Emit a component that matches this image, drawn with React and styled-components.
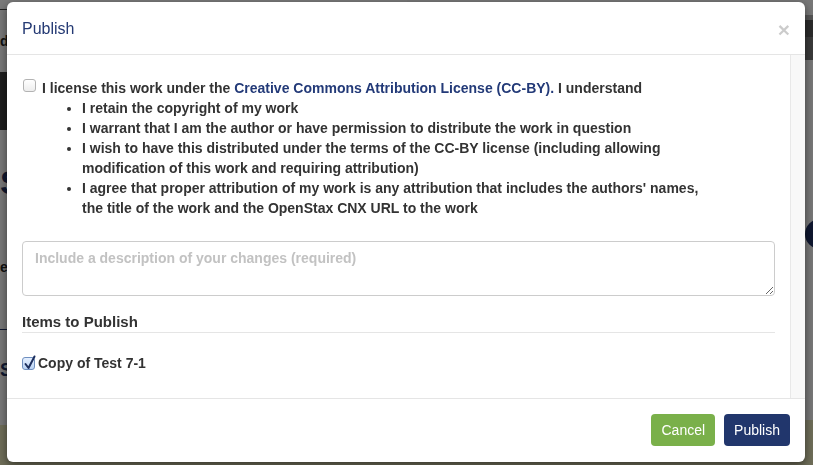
import React from "react";
import styled, { createGlobalStyle } from "styled-components";

const Global = createGlobalStyle`
  html, body { margin: 0; padding: 0; }
  body {
    width: 813px;
    height: 465px;
    overflow: hidden;
    font-family: "Liberation Sans", Arial, Helvetica, sans-serif;
    background: #fff;
  }
  * { box-sizing: border-box; }
`;

/* ---------- page behind the modal ---------- */
const Page = styled.div`
  display: grid;
  grid-template-columns: 1fr 1fr;
  height: 465px;
`;

const Column = styled.div`
  display: flex;
  flex-direction: column;
`;

const Band = styled.div`
  height: ${(p) => p.$h}px;
  background: ${(p) => p.$bg || "#eee"};
  border-bottom: ${(p) => (p.$line ? `1px solid ${p.$line}` : "none")};
  color: ${(p) => p.$color || "#222"};
  font-size: ${(p) => p.$fs || 13}px;
  font-weight: 700;
  line-height: ${(p) => p.$h}px;
  text-align: ${(p) => p.$align || "left"};
  overflow: hidden;
  white-space: nowrap;
`;

const Dot = styled.span`
  display: inline-block;
  width: 30px;
  height: 30px;
  margin-right: -22px;
  border-radius: 50%;
  background: #1d2d5e;
  vertical-align: middle;
`;

/* ---------- modal ---------- */
const Backdrop = styled.div`
  position: fixed;
  inset: 0;
  background: rgba(0, 0, 0, 0.5);
  display: flex;
  padding: 2px 8px 3px 7px;
`;

const Modal = styled.div`
  flex: 1;
  display: flex;
  flex-direction: column;
  background: #fff;
  border-radius: 6px;
  box-shadow: 0 3px 9px rgba(0, 0, 0, 0.5);
  overflow: hidden;
`;

const Header = styled.div`
  display: flex;
  align-items: center;
  justify-content: space-between;
  padding: 16px 15px 14px 15px;
  border-bottom: 1px solid #e5e5e5;
`;

const Title = styled.h4`
  margin: 0;
  font-size: 16px;
  line-height: 22px;
  font-weight: 400;
  color: #253a74;
`;

const Close = styled.button`
  border: 0;
  background: none;
  padding: 0;
  font-family: "Liberation Sans", Arial, sans-serif;
  font-size: 21px;
  line-height: 21px;
  font-weight: 700;
  color: #000;
  opacity: 0.2;
  cursor: pointer;
`;

const Body = styled.div`
  flex: 1;
  display: flex;
  min-height: 0;
`;

const Content = styled.div`
  flex: 1;
  padding: 23px 15px 15px 15px;
  color: #333;
  font-size: 14px;
  line-height: 20px;
  font-weight: 700;
`;

const ScrollTrack = styled.div`
  flex: none;
  width: 15px;
  background: #f8f8f8;
  border-left: 1px solid #e8e8e8;
`;

const CheckRow = styled.label`
  display: flex;
  align-items: flex-start;
  gap: ${(p) => p.$gap}px;
`;

const Box = styled.span`
  flex: none;
  width: 13px;
  height: 13px;
  margin-top: ${(p) => p.$mt}px;
  margin-left: ${(p) => p.$ml || 0}px;
  border-radius: 3px;
  border: 1px solid ${(p) => (p.$checked ? "#6f8fbf" : "#b3b3b3")};
  background: ${(p) =>
    p.$checked
      ? "linear-gradient(#e4efff, #b9d2f3)"
      : "linear-gradient(#ffffff, #ededed)"};
  position: relative;
`;

const CheckSvg = styled.svg`
  position: absolute;
  left: 0px;
  top: -3px;
`;

const TextCol = styled.div`
  flex: 1;
`;

const Link = styled.a`
  color: #233a78;
  text-decoration: none;
`;

const List = styled.ul`
  margin: 0;
  padding-left: 40px;
`;

const Description = styled.textarea`
  display: block;
  width: 100%;
  height: 55px;
  margin-top: 23px;
  padding: 6px 12px;
  border: 1px solid #ccc;
  border-radius: 4px;
  font-family: "Liberation Sans", Arial, sans-serif;
  font-size: 14px;
  font-weight: 700;
  line-height: 20px;
  color: #333;
  resize: vertical;
  outline: none;
  &::placeholder { color: #c2c2c2; }
`;

const SectionTitle = styled.h5`
  margin: 16px 0 0;
  padding-bottom: 0;
  border-bottom: 1px solid #e5e5e5;
  font-size: 15px;
  line-height: 20px;
  font-weight: 700;
  color: #333;
`;

const Items = styled.div`
  margin-top: 20px;
`;

const Footer = styled.div`
  display: flex;
  justify-content: flex-end;
  gap: 9px;
  padding: 15px 15px 16px;
  border-top: 1px solid #e5e5e5;
`;

const Button = styled.button`
  height: 32px;
  padding: 0 10px;
  border: 0;
  border-radius: 4px;
  font-family: "Liberation Sans", Arial, sans-serif;
  font-size: 14px;
  color: #fff;
  background: ${(p) => (p.$variant === "primary" ? "#21366c" : "#7ab04a")};
  cursor: pointer;
`;

function Checkbox({ checked, mt, ml }) {
  return (
    <Box $checked={checked} $mt={mt} $ml={ml}>
      {checked && (
        <CheckSvg width="14" height="16" viewBox="0 0 14 16">
          <path
            d="M2.5 9 L5.5 13 L11.5 1.5"
            fill="none"
            stroke="#1d2f5e"
            strokeWidth="2"
            strokeLinecap="round"
            strokeLinejoin="round"
          />
        </CheckSvg>
      )}
    </Box>
  );
}

export default function App() {
  return (
    <>
      <Global />
      <Page>
        <Column>
          <Band $h={10} $bg="#f2f2f2" $line="#444" />
          <Band $h={62} $bg="#eee" $fs={14} $color="#222">d</Band>
          <Band $h={58} $bg="#3c3c3c" />
          <Band $h={30} $bg="#eee" />
          <Band $h={45} $bg="#eee" $fs={34} $color="#20305f">S</Band>
          <Band $h={40} $bg="#eee" />
          <Band $h={45} $bg="#eee" $fs={14} $color="#222">e</Band>
          <Band $h={40} $bg="#eee" $line="#20305f" />
          <Band $h={25} $bg="#eee" />
          <Band $h={30} $bg="#eee" $fs={18} $color="#20305f">S</Band>
          <Band $h={40} $bg="#eee" />
          <Band $h={40} $bg="#dcdab0" />
        </Column>
        <Column>
          <Band $h={15} $bg="#eee" />
          <Band $h={5} $bg="#aaa" />
          <Band $h={17} $bg="#565656" />
          <Band $h={23} $bg="#747474" />
          <Band $h={150} $bg="#eee" />
          <Band $h={45} $bg="#eee" $align="right"><Dot /></Band>
          <Band $h={165} $bg="#eee" />
          <Band $h={45} $bg="#dcdab0" />
        </Column>
      </Page>

      <Backdrop>
        <Modal>
          <Header>
            <Title>Publish</Title>
            <Close aria-label="Close">×</Close>
          </Header>
          <Body>
            <Content>
              <CheckRow $gap={6}>
                <Checkbox mt={1} ml={1} />
                <TextCol>
                  I license this work under the{" "}
                  <Link>Creative Commons Attribution License (CC-BY).</Link> I
                  understand
                  <List>
                    <li>I retain the copyright of my work</li>
                    <li>
                      I warrant that I am the author or have permission to
                      distribute the work in question
                    </li>
                    <li>
                      I wish to have this distributed under the terms of the
                      CC-BY license (including allowing
                      <br />
                      modification of this work and requiring attribution)
                    </li>
                    <li>
                      I agree that proper attribution of my work is any
                      attribution that includes the authors' names,
                      <br />
                      the title of the work and the OpenStax CNX URL to the
                      work
                    </li>
                  </List>
                </TextCol>
              </CheckRow>
              <Description placeholder="Include a description of your changes (required)" />
              <SectionTitle>Items to Publish</SectionTitle>
              <Items>
                <CheckRow $gap={3}>
                  <Checkbox checked mt={4} />
                  <TextCol>Copy of Test 7-1</TextCol>
                </CheckRow>
              </Items>
            </Content>
            <ScrollTrack />
          </Body>
          <Footer>
            <Button>Cancel</Button>
            <Button $variant="primary">Publish</Button>
          </Footer>
        </Modal>
      </Backdrop>
    </>
  );
}
